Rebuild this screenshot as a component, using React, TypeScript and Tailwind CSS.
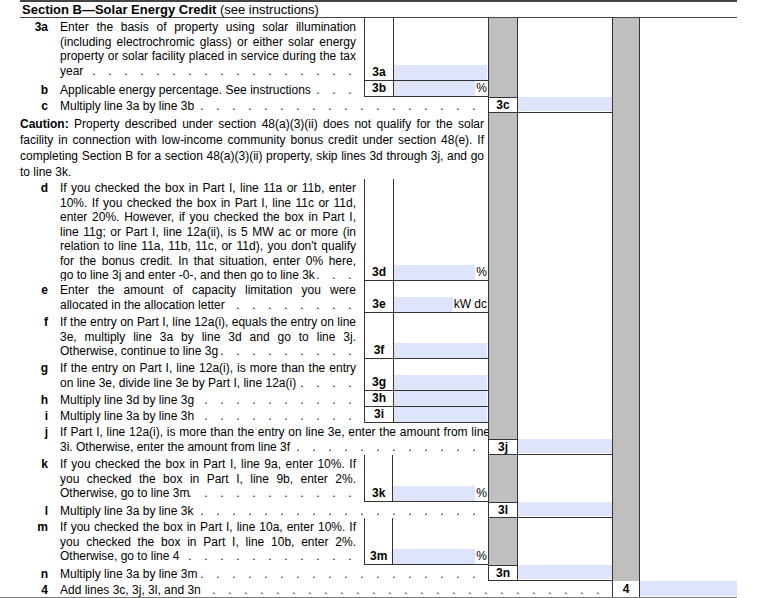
import React from "react";

const GRAY = "bg-[#bfbfbf]";
const BLUE = "bg-[#dde4fb]";

function Dots() {
  return (
    <span className="flex-1 min-w-0 flex justify-end overflow-hidden whitespace-nowrap pr-[6px]">
      {Array.from({ length: 40 }).map((_, i) => (
        <span key={i} className="inline-block w-[16px] shrink-0 text-center">.</span>
      ))}
    </span>
  );
}

function Text({ num, body, last, leader = true, w = "w-[296px]" }: { num?: string; body?: React.ReactNode; last?: React.ReactNode; leader?: boolean; w?: string }) {
  return (
    <div className="flex pl-[20px] pt-[2px] h-full min-w-0">
      <div className="w-[28px] text-right font-bold shrink-0">{num}</div>
      <div className="flex-1 min-w-0 pl-[12px] flex flex-col">
        {body && <div className={`${w} text-justify [text-align-last:justify]`}>{body}</div>}
        {last !== undefined && (
          <div className="flex min-w-0">
            <span className="whitespace-nowrap shrink-0">{last}</span>
            {leader && <Dots />}
          </div>
        )}
      </div>
    </div>
  );
}

function InnerBox({ label, suffix, blueW = "flex-1" }: { label?: string; suffix?: string; blueW?: string }) {
  return (
    <div className="w-[124px] h-full border-l border-b border-[#333] flex shrink-0">
      <div className="w-[29px] border-r border-[#333] flex flex-col justify-end items-center font-bold leading-[15px]">{label}</div>
      <div className="flex-1 flex flex-col justify-end">
        <div className="h-[15px] flex">
          <div className={`${blueW} ${BLUE} mr-[1px]`} />
          {suffix && <span className="pr-[1px] leading-[15px]">{suffix}</span>}
        </div>
      </div>
    </div>
  );
}

function Row({ h, left, inner, mid }: { h: string; left: React.ReactNode; inner?: React.ReactNode; mid?: string }) {
  return (
    <div className={`flex ${h}`}>
      {inner ? (
        <>
          <div className="w-[364px] h-full overflow-hidden shrink-0">{left}</div>
          {inner}
        </>
      ) : (
        <div className="w-[488px] h-full overflow-hidden shrink-0">{left}</div>
      )}
      {mid ? (
        <>
          <div className="w-[29px] border-l border-[#333] flex flex-col shrink-0">
            <div className={`flex-1 ${GRAY}`} />
            <div className="h-[16px] border-t border-b border-[#333] flex items-center justify-center font-bold leading-[14px]">{mid}</div>
          </div>
          <div className="w-[95px] border-l border-[#333] flex flex-col justify-end shrink-0">
            <div className="h-[16px] border-b border-[#333] flex">
              <div className={`flex-1 ${BLUE} mb-[1px]`} />
            </div>
          </div>
        </>
      ) : (
        <>
          <div className={`w-[29px] border-l border-[#333] shrink-0 ${GRAY}`} />
          <div className="w-[95px] border-l border-[#333] shrink-0" />
        </>
      )}
      <div className={`w-[28px] border-l border-r border-[#333] shrink-0 ${GRAY}`} />
    </div>
  );
}

export default function App() {
  return (
    <div className="w-[760px] h-[598px] bg-white text-black text-[12px] leading-[14.5px] overflow-hidden" style={{ fontFamily: '"Liberation Sans", Arial, sans-serif' }}>
      <div className="ml-[20px] w-[717px] h-[18px] border-t-2 border-b border-[#444] text-[13px] leading-[15px] pl-[2px]">
        <b>Section B—Solar Energy Credit</b> (see instructions)
      </div>
      <Row h="h-[63px]" left={<Text num="3a" body="Enter the basis of property using solar illumination (including electrochromic glass) or either solar energy property or solar facility placed in service during the tax" last="year" />} inner={<InnerBox label="3a" />} />
      <Row h="h-[16px]" left={<Text num="b" last="Applicable energy percentage. See instructions" />} inner={<InnerBox label="3b" suffix="%" />} />
      <Row h="h-[16px]" left={<Text num="c" last="Multiply line 3a by line 3b" />} mid="3c" />
      <Row h="h-[66px]" left={
        <div className="pl-[20px] pr-[4px] pt-[3px] leading-[16px] text-justify">
          <b>Caution:</b> Property described under section 48(a)(3)(ii) does not qualify for the solar facility in connection with low-income community bonus credit under section 48(e). If completing Section B for a section 48(a)(3)(ii) property, skip lines 3d through 3j, and go to line 3k.
        </div>
      } />
      <Row h="h-[102px]" left={<Text num="d" body="If you checked the box in Part I, line 11a or 11b, enter 10%. If you checked the box in Part I, line 11c or 11d, enter 20%. However, if you checked the box in Part I, line 11g; or Part I, line 12a(ii), is 5 MW ac or more (in relation to line 11a, 11b, 11c, or 11d), you don't qualify for the bonus credit. In that situation, enter 0% here," last="go to line 3j and enter -0-, and then go to line 3k" />} inner={<InnerBox label="3d" suffix="%" />} />
      <Row h="h-[32px]" left={<Text num="e" body="Enter the amount of capacity limitation you were" last="allocated in the allocation letter" />} inner={<InnerBox label="3e" suffix="kW dc" />} />
      <Row h="h-[46px]" left={<Text num="f" body="If the entry on Part I, line 12a(i), equals the entry on line 3e, multiply line 3a by line 3d and go to line 3j." last="Otherwise, continue to line 3g" />} inner={<InnerBox label="3f" />} />
      <Row h="h-[32px]" left={<Text num="g" body="If the entry on Part I, line 12a(i), is more than the entry" last="on line 3e, divide line 3e by Part I, line 12a(i)" />} inner={<InnerBox label="3g" />} />
      <Row h="h-[16px]" left={<Text num="h" last="Multiply line 3d by line 3g" />} inner={<InnerBox label="3h" />} />
      <Row h="h-[16px]" left={<Text num="i" last="Multiply line 3a by line 3h" />} inner={<InnerBox label="3i" />} />
      <Row h="h-[32px]" left={<Text num="j" w="w-[430px]" body="If Part I, line 12a(i), is more than the entry on line 3e, enter the amount from line" last="3i. Otherwise, enter the amount from line 3f" />} mid="3j" />
      <Row h="h-[47px]" left={<Text num="k" body="If you checked the box in Part I, line 9a, enter 10%. If you checked the box in Part I, line 9b, enter 2%." last="Otherwise, go to line 3m" />} inner={<InnerBox label="3k" suffix="%" blueW="w-[82px]" />} />
      <Row h="h-[16px]" left={<Text num="l" last="Multiply line 3a by line 3k" />} mid="3l" />
      <Row h="h-[47px]" left={<Text num="m" body="If you checked the box in Part I, line 10a, enter 10%. If you checked the box in Part I, line 10b, enter 2%." last="Otherwise, go to line 4" />} inner={<InnerBox label="3m" suffix="%" blueW="w-[82px]" />} />
      <Row h="h-[16px]" left={<Text num="n" last="Multiply line 3a by line 3m" />} mid="3n" />
      <div className="flex h-[18px] w-[737px] border-b-2 border-[#777]">
        <div className="w-[612px] overflow-hidden shrink-0"><Text num="4" last="Add lines 3c, 3j, 3l, and 3n" /></div>
        <div className="w-[28px] border-l border-r border-[#333] flex items-center justify-center font-bold shrink-0">4</div>
        <div className="flex-1 flex"><div className={`flex-1 ${BLUE} mb-[1px]`} /></div>
      </div>
    </div>
  );
}
